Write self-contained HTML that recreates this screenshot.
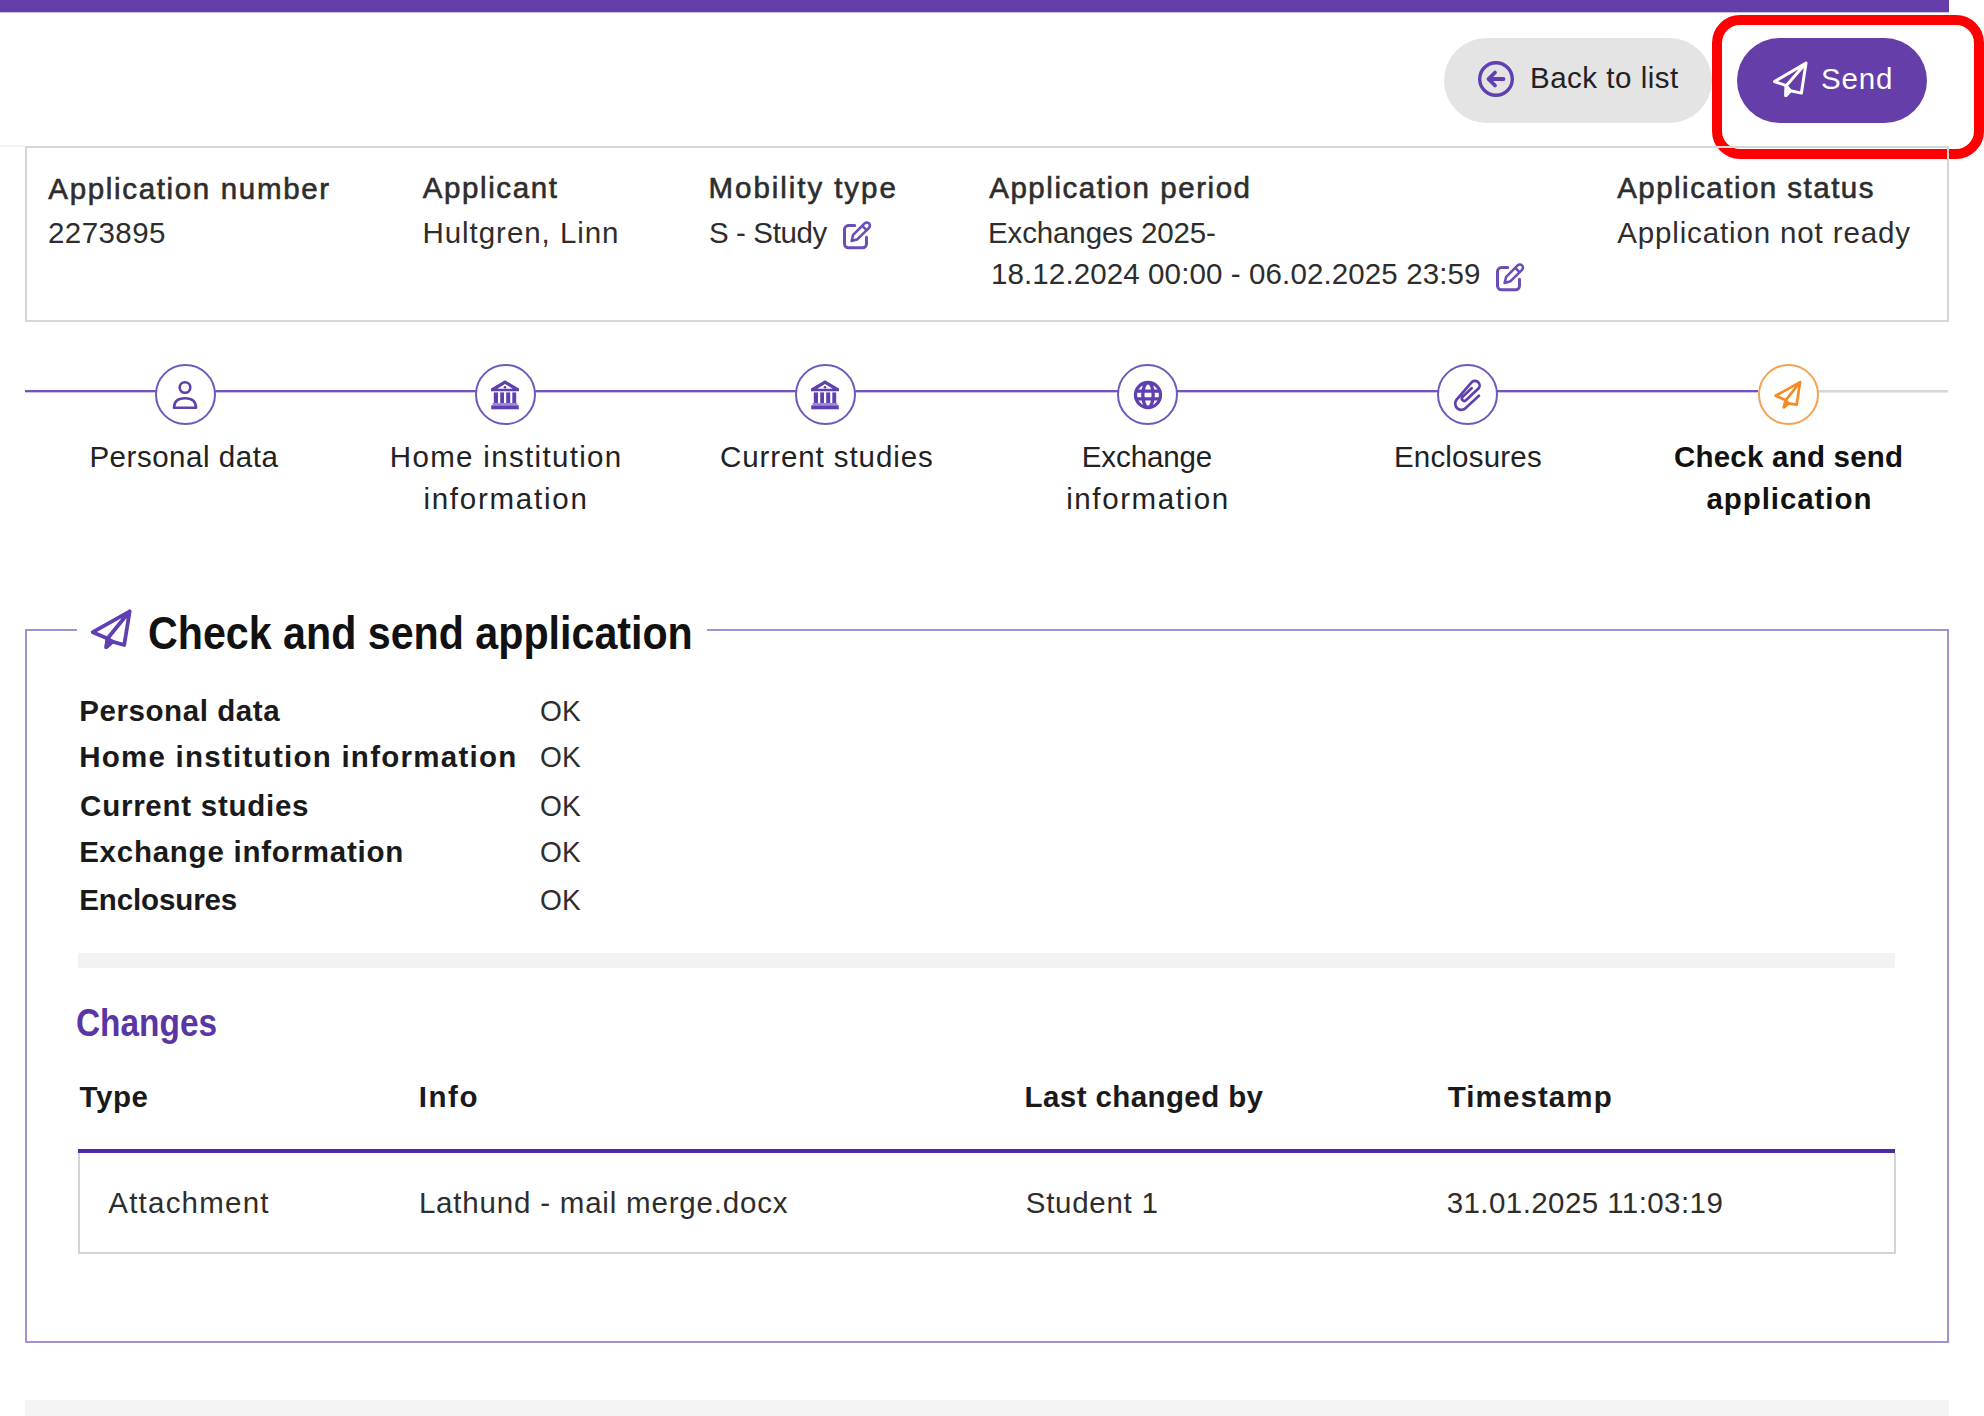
<!DOCTYPE html>
<html><head><meta charset="utf-8"><title>Check and send application</title>
<style>
html,body{margin:0;padding:0;background:#fff;}
body{width:1984px;height:1416px;position:relative;overflow:hidden;font-family:"Liberation Sans",sans-serif;}
.t{position:absolute;white-space:nowrap;}
.abs{position:absolute;}
.circ{position:absolute;width:57px;height:57px;border:2px solid #7058bd;border-radius:50%;background:#fff;}
svg{position:absolute;overflow:visible;}
</style></head><body>
<div class="abs" style="left:0;top:0;width:1949px;height:12px;background:#653eaa;box-shadow:0 0.6px 0 rgba(101,62,170,0.55)"></div>
<div class="abs" style="left:0;top:145px;width:25px;height:2px;background:#f4f4f4"></div>
<!-- buttons -->
<div class="abs" style="left:1444px;top:37.5px;width:268px;height:85.5px;border-radius:43px;background:#e4e4e4"></div>
<div class="abs" style="left:1737px;top:37.5px;width:190px;height:85.5px;border-radius:43px;background:#653eaa"></div>
<svg style="left:1476px;top:59px" width="40" height="40" viewBox="0 0 40 40"><circle cx="20" cy="20" r="16.3" fill="none" stroke="#6040b0" stroke-width="3.4"/><path d="M27.5,20 H12.5 M19,13.5 L12.5,20 L19,26.5" fill="none" stroke="#6040b0" stroke-width="3.8" stroke-linecap="round" stroke-linejoin="round"/></svg>
<svg style="left:1765px;top:55px" width="50" height="50" viewBox="0 0 50 50"><g fill="#fff" stroke="#fff" stroke-width="3.0" stroke-linejoin="round" stroke-linecap="round"><path d="M41,8.1 L9.5,26.5 L21.2,30.7 L20.8,40.6 L25.4,35.7 L36.4,38.1 Z M41,8.1 L21.2,30.7" fill="none"/><path d="M21.2,30.7 L20.8,40.6 L25.4,35.7 Z"/></g></svg>
<!-- red highlight -->
<div class="abs" style="left:1712px;top:15px;width:252px;height:124px;border:10px solid #ff0000;border-radius:28px"></div>
<!-- info box -->
<div class="abs" style="left:25px;top:146px;width:1920px;height:172px;border:2px solid #d6d6d6;background:transparent"></div>
<svg style="left:838px;top:215px" width="40" height="40" viewBox="0 0 40 40"><g stroke="#6a4db8"><path d="M16.7,10.6 H10.5 A4,4 0 0 0 6.5,14.6 V28.8 A4,4 0 0 0 10.5,32.8 H24.5 A4,4 0 0 0 28.5,28.8 V22.3" fill="none" stroke-width="3" stroke-linecap="round"/><path d="M13.6,26 L15.2,19.8 L26.6,8.4 A3.1,3.1 0 0 1 31,12.8 L19.6,24.2 Z M24.2,10.8 L28.6,15.2" fill="none" stroke-width="2.6" stroke-linejoin="round"/></g></svg>
<svg style="left:1491px;top:257px" width="40" height="40" viewBox="0 0 40 40"><g stroke="#6a4db8"><path d="M16.7,10.6 H10.5 A4,4 0 0 0 6.5,14.6 V28.8 A4,4 0 0 0 10.5,32.8 H24.5 A4,4 0 0 0 28.5,28.8 V22.3" fill="none" stroke-width="3" stroke-linecap="round"/><path d="M13.6,26 L15.2,19.8 L26.6,8.4 A3.1,3.1 0 0 1 31,12.8 L19.6,24.2 Z M24.2,10.8 L28.6,15.2" fill="none" stroke-width="2.6" stroke-linejoin="round"/></g></svg>
<!-- stepper -->
<div class="abs" style="left:25px;top:390px;width:1733px;height:2px;background:#7152c0;box-shadow:0 1px 0 rgba(113,82,192,0.35)"></div>
<div class="abs" style="left:1818px;top:390px;width:130px;height:2px;background:#d6d6d6;box-shadow:0 1px 0 rgba(200,200,200,0.4)"></div>
<div class="circ" style="left:154.7px;top:364px;border-color:#7058bd"></div><div class="circ" style="left:474.7px;top:364px;border-color:#7058bd"></div><div class="circ" style="left:794.7px;top:364px;border-color:#7058bd"></div><div class="circ" style="left:1117.3px;top:364px;border-color:#7058bd"></div><div class="circ" style="left:1437.3px;top:364px;border-color:#7058bd"></div><div class="circ" style="left:1757.5px;top:364px;border-color:#f3a354"></div>
<svg style="left:165.2px;top:374px" width="40" height="40" viewBox="0 0 40 40"><g fill="none" stroke="#6040b0" stroke-width="2.6"><circle cx="20" cy="13.5" r="5.3"/><path d="M9,33.8 Q9,24.2 20,24.2 Q31,24.2 31,33.8 Z" stroke-linejoin="round"/></g></svg>
<svg style="left:485.2px;top:374px" width="40" height="40" viewBox="0 0 40 40"><g fill="#6040b0" stroke="none"><path d="M20,6.3 L34,14.6 L34,17.2 L6,17.2 L6,14.6 Z M20,9.9 L12.3,14.7 L27.7,14.7 Z" fill-rule="evenodd"/><circle cx="20" cy="13.2" r="1.3"/><rect x="8.8" y="18.4" width="4.2" height="10.6"/><rect x="15.2" y="18.4" width="3.8" height="10.6"/><rect x="21.2" y="18.4" width="4" height="10.6"/><rect x="27.3" y="18.4" width="3.9" height="10.6"/><rect x="7.6" y="29.2" width="24.8" height="1.6" opacity="0.75"/><rect x="6.2" y="31.3" width="27.6" height="4"/></g></svg><svg style="left:805.2px;top:374px" width="40" height="40" viewBox="0 0 40 40"><g fill="#6040b0" stroke="none"><path d="M20,6.3 L34,14.6 L34,17.2 L6,17.2 L6,14.6 Z M20,9.9 L12.3,14.7 L27.7,14.7 Z" fill-rule="evenodd"/><circle cx="20" cy="13.2" r="1.3"/><rect x="8.8" y="18.4" width="4.2" height="10.6"/><rect x="15.2" y="18.4" width="3.8" height="10.6"/><rect x="21.2" y="18.4" width="4" height="10.6"/><rect x="27.3" y="18.4" width="3.9" height="10.6"/><rect x="7.6" y="29.2" width="24.8" height="1.6" opacity="0.75"/><rect x="6.2" y="31.3" width="27.6" height="4"/></g></svg><svg style="left:1127.8px;top:374.8px" width="40" height="40" viewBox="0 0 40 40"><g fill="none" stroke="#6040b0" stroke-width="3.3"><circle cx="20" cy="20" r="12.5"/><ellipse cx="20" cy="20" rx="5.2" ry="12.4"/><path d="M8,16.2 H32 M8,23.8 H32"/></g></svg><svg style="left:1436.2px;top:364px" width="60" height="60" viewBox="0 0 60 60"><path d="M42.95,31.7 L30.36,43.32 A6.2,6.2 0 0 1 20.44,35.88 L35.32,18.74 A4.6,4.6 0 0 1 42.68,24.26 L30.22,35.94 A2.4,2.4 0 0 1 26.38,33.06 L35.6,24.3" fill="none" stroke="#6040b0" stroke-width="2.7" stroke-linecap="round"/></svg><svg style="left:1765px;top:372px" width="46" height="46" viewBox="0 0 46 46"><g fill="#f28c28" stroke="#f28c28" stroke-width="2.7" stroke-linejoin="round" stroke-linecap="round"><path d="M35.1,10.1 L10.6,23.8 L20.8,28.2 L18.9,35.2 L23.3,31.4 L31.6,32.7 Z M35.1,10.1 L20.8,28.2" fill="none"/><path d="M20.8,28.2 L18.9,35.2 L23.3,31.4 Z"/></g></svg>
<div class="abs" style="left:25px;top:629px;width:1920px;height:710px;border:2px solid #a590d2;"></div>
<div class="abs" style="left:77px;top:620px;width:630px;height:20px;background:#fff"></div>
<svg style="left:88px;top:605.5px" width="42" height="42" viewBox="0 0 42 42"><g fill="#6040b0" stroke="#6040b0" stroke-width="3.8"><path d="M41.7,5.3 L4.8,26.2 L19.5,32.5 L18.3,41.2 L24.4,35.7 L36.2,39 Z M41.7,5.3 L19.5,32.5" fill="none" stroke-linejoin="round" stroke-linecap="round"/><path d="M19.5,32.5 L18.3,41.2 L24.4,35.7 Z" stroke-linejoin="round"/></g></svg>
<div class="abs" style="left:78px;top:953px;width:1817px;height:15px;background:#f2f2f2"></div>
<div class="abs" style="left:78px;top:1149px;width:1817px;height:4px;background:#4d2a9e"></div>
<div class="abs" style="left:78px;top:1153px;width:1814px;height:99px;border:2px solid #d4d4d4;border-top:none"></div>
<div class="abs" style="left:25px;top:1400px;width:1924px;height:16px;background:#f4f4f4"></div>
<div class="t" style="left:1530.00px;top:63.00px;font-size:29.5px;font-weight:400;line-height:29.5px;color:#222222;letter-spacing:0.506px;">Back to list</div>
<div class="t" style="left:1821.00px;top:63.50px;font-size:29.5px;font-weight:400;line-height:29.5px;color:#ffffff;letter-spacing:0.837px;">Send</div>
<div class="t" style="left:48.30px;top:173.60px;font-size:29.5px;font-weight:400;line-height:29.5px;color:#2d2d2d;letter-spacing:1.664px;-webkit-text-stroke:0.6px #2d2d2d;">Application number</div>
<div class="t" style="left:48.00px;top:218.00px;font-size:29.5px;font-weight:400;line-height:29.5px;color:#2d2d2d;letter-spacing:0.427px;">2273895</div>
<div class="t" style="left:422.75px;top:173.30px;font-size:29.5px;font-weight:400;line-height:29.5px;color:#2d2d2d;letter-spacing:1.605px;-webkit-text-stroke:0.6px #2d2d2d;">Applicant</div>
<div class="t" style="left:422.50px;top:218.00px;font-size:29.5px;font-weight:400;line-height:29.5px;color:#2d2d2d;letter-spacing:0.949px;">Hultgren, Linn</div>
<div class="t" style="left:708.60px;top:173.00px;font-size:29.5px;font-weight:400;line-height:29.5px;color:#2d2d2d;letter-spacing:1.938px;-webkit-text-stroke:0.6px #2d2d2d;">Mobility type</div>
<div class="t" style="left:709.00px;top:218.00px;font-size:29.5px;font-weight:400;line-height:29.5px;color:#2d2d2d;letter-spacing:-0.385px;">S - Study</div>
<div class="t" style="left:989.20px;top:173.00px;font-size:29.5px;font-weight:400;line-height:29.5px;color:#2d2d2d;letter-spacing:1.546px;-webkit-text-stroke:0.6px #2d2d2d;">Application period</div>
<div class="t" style="left:988.00px;top:218.00px;font-size:29.5px;font-weight:400;line-height:29.5px;color:#2d2d2d;letter-spacing:-0.127px;">Exchanges 2025-</div>
<div class="t" style="left:991.00px;top:259.20px;font-size:29.5px;font-weight:400;line-height:29.5px;color:#2d2d2d;letter-spacing:0.114px;">18.12.2024 00:00 - 06.02.2025 23:59</div>
<div class="t" style="left:1617.20px;top:173.00px;font-size:29.5px;font-weight:400;line-height:29.5px;color:#2d2d2d;letter-spacing:1.472px;-webkit-text-stroke:0.6px #2d2d2d;">Application status</div>
<div class="t" style="left:1617.20px;top:218.00px;font-size:29.5px;font-weight:400;line-height:29.5px;color:#2d2d2d;letter-spacing:0.862px;">Application not ready</div>
<div class="t" style="left:89.40px;top:442.20px;font-size:29.5px;font-weight:400;line-height:29.5px;color:#222222;letter-spacing:0.530px;">Personal data</div>
<div class="t" style="left:389.85px;top:442.20px;font-size:29.5px;font-weight:400;line-height:29.5px;color:#222222;letter-spacing:1.326px;">Home institution</div>
<div class="t" style="left:423.40px;top:484.10px;font-size:29.5px;font-weight:400;line-height:29.5px;color:#222222;letter-spacing:1.748px;">information</div>
<div class="t" style="left:720.00px;top:442.20px;font-size:29.5px;font-weight:400;line-height:29.5px;color:#222222;letter-spacing:0.908px;">Current studies</div>
<div class="t" style="left:1081.80px;top:442.20px;font-size:29.5px;font-weight:400;line-height:29.5px;color:#222222;letter-spacing:-0.115px;">Exchange</div>
<div class="t" style="left:1066.20px;top:484.10px;font-size:29.5px;font-weight:400;line-height:29.5px;color:#222222;letter-spacing:1.608px;">information</div>
<div class="t" style="left:1393.90px;top:442.20px;font-size:29.5px;font-weight:400;line-height:29.5px;color:#222222;letter-spacing:0.202px;">Enclosures</div>
<div class="t" style="left:1674.00px;top:442.20px;font-size:29.5px;font-weight:700;line-height:29.5px;color:#111111;letter-spacing:0.214px;">Check and send</div>
<div class="t" style="left:1706.40px;top:484.10px;font-size:29.5px;font-weight:700;line-height:29.5px;color:#111111;letter-spacing:0.931px;">application</div>
<div class="t" style="left:148.00px;top:609.50px;font-size:46px;font-weight:700;line-height:46px;color:#111111;transform:scaleX(0.8955);transform-origin:0 0;">Check and send application</div>
<div class="t" style="left:79.20px;top:696.00px;font-size:29.5px;font-weight:700;line-height:29.5px;color:#1a1a1a;letter-spacing:0.579px;">Personal data</div>
<div class="t" style="left:79.20px;top:742.00px;font-size:29.5px;font-weight:700;line-height:29.5px;color:#1a1a1a;letter-spacing:1.255px;">Home institution information</div>
<div class="t" style="left:80.10px;top:790.60px;font-size:29.5px;font-weight:700;line-height:29.5px;color:#1a1a1a;letter-spacing:0.743px;">Current studies</div>
<div class="t" style="left:79.20px;top:837.20px;font-size:29.5px;font-weight:700;line-height:29.5px;color:#1a1a1a;letter-spacing:0.749px;">Exchange information</div>
<div class="t" style="left:79.20px;top:885.40px;font-size:29.5px;font-weight:700;line-height:29.5px;color:#1a1a1a;letter-spacing:-0.115px;">Enclosures</div>
<div class="t" style="left:540.20px;top:696.00px;font-size:29.5px;font-weight:400;line-height:29.5px;color:#2d2d2d;transform:scaleX(0.9536);transform-origin:0 0;">OK</div>
<div class="t" style="left:540.20px;top:742.00px;font-size:29.5px;font-weight:400;line-height:29.5px;color:#2d2d2d;transform:scaleX(0.9536);transform-origin:0 0;">OK</div>
<div class="t" style="left:540.20px;top:790.60px;font-size:29.5px;font-weight:400;line-height:29.5px;color:#2d2d2d;transform:scaleX(0.9536);transform-origin:0 0;">OK</div>
<div class="t" style="left:540.20px;top:837.20px;font-size:29.5px;font-weight:400;line-height:29.5px;color:#2d2d2d;transform:scaleX(0.9536);transform-origin:0 0;">OK</div>
<div class="t" style="left:540.20px;top:885.40px;font-size:29.5px;font-weight:400;line-height:29.5px;color:#2d2d2d;transform:scaleX(0.9536);transform-origin:0 0;">OK</div>
<div class="t" style="left:76.20px;top:1004.40px;font-size:38px;font-weight:700;line-height:38px;color:#5a35a6;transform:scaleX(0.8791);transform-origin:0 0;">Changes</div>
<div class="t" style="left:79.50px;top:1082.30px;font-size:29.5px;font-weight:700;line-height:29.5px;color:#1a1a1a;letter-spacing:0.581px;">Type</div>
<div class="t" style="left:418.80px;top:1082.30px;font-size:29.5px;font-weight:700;line-height:29.5px;color:#1a1a1a;letter-spacing:1.520px;">Info</div>
<div class="t" style="left:1024.60px;top:1082.30px;font-size:29.5px;font-weight:700;line-height:29.5px;color:#1a1a1a;letter-spacing:0.402px;">Last changed by</div>
<div class="t" style="left:1447.70px;top:1082.30px;font-size:29.5px;font-weight:700;line-height:29.5px;color:#1a1a1a;letter-spacing:1.102px;">Timestamp</div>
<div class="t" style="left:108.30px;top:1188.00px;font-size:29.5px;font-weight:400;line-height:29.5px;color:#2d2d2d;letter-spacing:1.220px;">Attachment</div>
<div class="t" style="left:418.90px;top:1188.00px;font-size:29.5px;font-weight:400;line-height:29.5px;color:#2d2d2d;letter-spacing:0.804px;">Lathund - mail merge.docx</div>
<div class="t" style="left:1025.80px;top:1188.00px;font-size:29.5px;font-weight:400;line-height:29.5px;color:#2d2d2d;letter-spacing:0.714px;">Student 1</div>
<div class="t" style="left:1446.70px;top:1188.00px;font-size:29.5px;font-weight:400;line-height:29.5px;color:#2d2d2d;letter-spacing:0.424px;">31.01.2025 11:03:19</div>
</body></html>
